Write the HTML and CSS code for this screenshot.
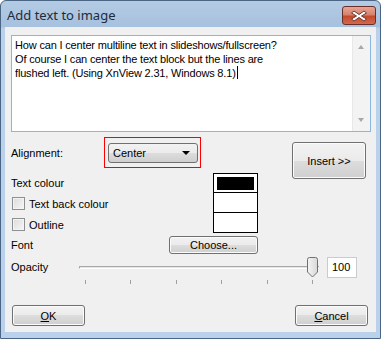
FILE: index.html
```html
<!DOCTYPE html>
<html lang="en">
<head>
    <meta charset="UTF-8">
    <title>Add text to image</title>
    <link rel="stylesheet" href="styles.css">
</head>
<body>
    <div class="window">
        <div class="titlebar">
            <span class="title">Add text to image</span>
            <button class="close-button">
                <svg width="16" height="12" viewBox="0 0 16 12">
                    <path d="M3 1 L8 4.5 L13 1 L15.5 3 L10.5 6 L15.5 9 L13 11 L8 7.5 L3 11 L0.5 9 L5.5 6 L0.5 3 Z" fill="#ffffff" stroke="#6b3a32" stroke-width="1" stroke-linejoin="round"/>
                </svg>
            </button>
        </div>
        <div class="client">
            <div class="text-box">
                <div class="text-content">How can I center multiline text in slideshows/fullscreen?<br>Of course I can center the text block but the lines are<br>flushed left. (Using XnView 2.31, Windows 8.1)<span class="caret"></span></div>
                <div class="scrollbar">
                    <span class="arrow up"></span>
                    <span class="arrow down"></span>
                </div>
            </div>

            <div class="middle">
                <div class="left-col">
                    <div class="align-row">
                        <span class="label">Alignment:</span>
                        <div class="highlight">
                            <div class="combo">Center<span class="drop"></span></div>
                        </div>
                    </div>
                    <div class="colours">
                        <div class="colour-labels">
                            <div class="crow">Text colour</div>
                            <div class="crow"><span class="check"></span>Text back colour</div>
                            <div class="crow"><span class="check"></span>Outline</div>
                        </div>
                        <div class="swatches">
                            <div class="swatch"><span class="fill"></span></div>
                            <div class="swatch"></div>
                            <div class="swatch"></div>
                        </div>
                    </div>
                    <div class="font-row">
                        <span class="label">Font</span>
                        <button class="btn choose">Choose...</button>
                    </div>
                </div>
                <div class="right-col">
                    <button class="btn insert">Insert &gt;&gt;</button>
                </div>
            </div>

            <div class="opacity-row">
                <span class="label opacity-label">Opacity</span>
                <div class="slider">
                    <div class="groove"></div>
                    <div class="thumb">
                        <svg width="11" height="21" viewBox="0 0 11 21">
                            <defs>
                                <linearGradient id="tg" x1="0" y1="0" x2="1" y2="0">
                                    <stop offset="0" stop-color="#f4f4f4"/>
                                    <stop offset="1" stop-color="#d8d8d8"/>
                                </linearGradient>
                            </defs>
                            <path d="M2.5 0.5 H8.5 Q10.5 0.5 10.5 2.5 V15 L5.5 20 L0.5 15 V2.5 Q0.5 0.5 2.5 0.5 Z" fill="url(#tg)" stroke="#707070"/>
                        </svg>
                    </div>
                    <div class="ticks">
                        <span></span><span></span><span></span><span></span><span></span><span></span>
                    </div>
                </div>
                <div class="value-box">100</div>
            </div>

            <div class="footer">
                <button class="btn dialog-btn"><u>O</u>K</button>
                <button class="btn dialog-btn"><u>C</u>ancel</button>
            </div>
        </div>
    </div>
</body>
</html>
```

FILE: styles.css
```css
body {
    margin: 0;
    background: #ffffff;
    font-family: "Liberation Sans", Arial, sans-serif;
    font-size: 11px;
    color: #000000;
}
.window {
    width: 381px;
    height: 339px;
    box-sizing: border-box;
    border: 1px solid #4a6684;
    border-radius: 6px 6px 0 0;
    background: linear-gradient(180deg, #b4cbe4 0px, #a6c1de 26px, #b9d1ea 27px);
    display: flex;
    flex-direction: column;
}
.titlebar {
    height: 26px;
    display: flex;
    align-items: center;
    padding: 0 4px 0 6px;
}
.title {
    flex: 1;
    font-family: "Noto Sans", sans-serif;
    font-size: 13px;
    color: #1e2b3a;
    margin-top: 1px;
}
.close-button {
    width: 34px;
    height: 19px;
    margin-top: 3px;
    padding: 0;
    border: 1px solid #6a2f2a;
    border-radius: 3px;
    background: linear-gradient(180deg, #e8a594 0%, #d7826f 45%, #c44a2e 55%, #d36a4c 100%);
    display: flex;
    align-items: center;
    justify-content: center;
}
.client {
    margin: 0 4px 0 4px;
    height: 305px;
    background: #f0f0f0;
    padding: 8px 7px 0 6px;
    box-sizing: border-box;
}
.text-box {
    width: 360px;
    height: 97px;
    box-sizing: border-box;
    border: 1px solid #8ab7e2;
    background: #ffffff;
    display: flex;
}
.text-content {
    flex: 1;
    padding: 3px 3px;
    line-height: 13.5px;
    letter-spacing: -0.17px;
}
.caret {
    display: inline-block;
    width: 1px;
    height: 13px;
    background: #000000;
    vertical-align: -2px;
    margin-left: 1px;
}
.scrollbar {
    width: 17px;
    background: #f3f3f3;
    border-left: 1px solid #e8e8e8;
    position: relative;
}
.arrow {
    position: absolute;
    left: 5px;
    width: 0;
    height: 0;
    border-left: 3.5px solid transparent;
    border-right: 3.5px solid transparent;
}
.arrow.up {
    top: 9px;
    border-bottom: 4px solid #a8a8a8;
}
.arrow.down {
    bottom: 9px;
    border-top: 4px solid #a8a8a8;
}
.middle {
    display: flex;
    margin-top: 5px;
}
.left-col {
    width: 247px;
}
.right-col {
    margin-left: 34px;
    padding-top: 5px;
}
.align-row {
    display: flex;
    align-items: center;
    height: 31px;
}
.align-row .label {
    width: 93px;
    margin-top: 1px;
}
.highlight {
    width: 97px;
    height: 31px;
    box-sizing: border-box;
    border: 1px solid #ff0000;
    padding: 5px 0 0 3px;
}
.combo {
    width: 90px;
    height: 20px;
    box-sizing: border-box;
    border: 1px solid #707070;
    border-radius: 3px;
    background: linear-gradient(180deg, #f2f2f2 0%, #ebebeb 50%, #dddddd 50%, #cfcfcf 100%);
    padding: 0 0 0 4px;
    line-height: 18px;
    position: relative;
}
.drop {
    position: absolute;
    right: 7px;
    top: 7px;
    border-left: 4px solid transparent;
    border-right: 4px solid transparent;
    border-top: 4px solid #000000;
}
.colours {
    display: flex;
    margin-top: 4px;
    height: 63px;
}
.colour-labels {
    width: 202px;
}
.crow {
    height: 21px;
    display: flex;
    align-items: center;
}
.check {
    width: 13px;
    height: 13px;
    box-sizing: border-box;
    border: 1px solid #8e8f8f;
    background: linear-gradient(135deg, #dcdcdc, #f6f6f6);
    box-shadow: inset 0 0 0 1px #f4f4f4;
    margin: 0 4px 0 1px;
}
.swatches {
    width: 45px;
    height: 60px;
    margin-top: 1px;
    box-sizing: border-box;
    border: 1px solid #000000;
}
.swatch {
    height: 20px;
    background: #ffffff;
    border-top: 1px solid #000000;
    padding: 3px;
    box-sizing: border-box;
}
.swatch:first-child {
    border-top: none;
    height: 18px;
}
.fill {
    display: block;
    width: 37px;
    height: 13px;
    background: #000000;
}
.font-row {
    display: flex;
    align-items: center;
    height: 18px;
    margin-top: 1px;
}
.font-row .label {
    width: 158px;
}
.btn {
    font-family: "Liberation Sans", Arial, sans-serif;
    font-size: 11px;
    color: #000000;
    border: 1px solid #707070;
    border-radius: 3px;
    background: linear-gradient(180deg, #f2f2f2 0%, #ebebeb 50%, #dddddd 50%, #cfcfcf 100%);
    box-shadow: inset 0 0 0 1px #fbfbfb;
    padding: 0;
}
.choose {
    width: 89px;
    height: 18px;
}
.insert {
    width: 74px;
    height: 37px;
}
.opacity-row {
    display: flex;
    margin-top: 3px;
    height: 28px;
}
.opacity-label {
    width: 68px;
    height: 21px;
    line-height: 21px;
}
.slider {
    width: 240px;
    position: relative;
}
.groove {
    position: absolute;
    top: 9px;
    left: 0;
    right: 0;
    height: 3px;
    border-top: 1px solid #a8a8a8;
    border-left: 1px solid #a8a8a8;
    background: #e6e6e6;
    border-bottom: 1px solid #ffffff;
    box-sizing: border-box;
}
.thumb {
    position: absolute;
    top: 0;
    left: 228px;
    height: 21px;
}
.ticks {
    position: absolute;
    top: 23px;
    left: 6px;
    width: 228px;
    display: flex;
    justify-content: space-between;
}
.ticks span {
    width: 1px;
    height: 4px;
    background: #a0a0a0;
}
.value-box {
    width: 30px;
    height: 21px;
    box-sizing: border-box;
    margin-left: 8px;
    border: 1px solid #c8cbd0;
    background: #ffffff;
    padding-left: 4px;
    line-height: 19px;
}
.footer {
    display: flex;
    justify-content: space-between;
    margin-top: 20px;
    padding: 0 1px 0 1px;
}
.dialog-btn {
    width: 73px;
    height: 21px;
}
```
